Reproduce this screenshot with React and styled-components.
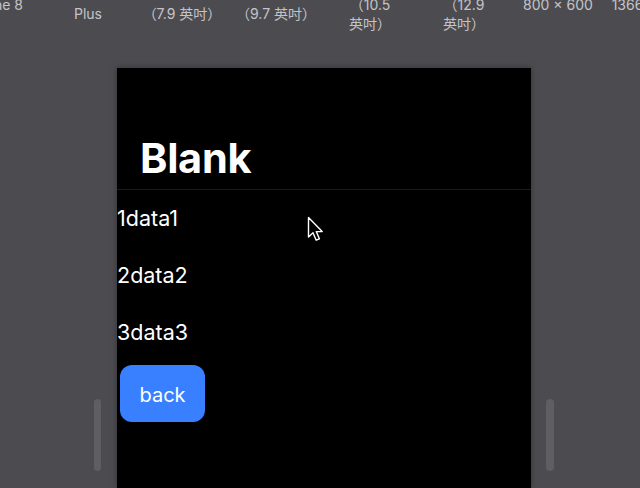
import { styled, createGlobalStyle } from "styled-components";

const GlobalStyle = createGlobalStyle`
  html, body {
    margin: 0;
    padding: 0;
    background-color: #4c4c50;
    overflow: hidden;
  }
  body {
    font-family: "Inter", "Noto Sans CJK TC", sans-serif;
  }
`;

const Page = styled.div`
  position: relative;
  height: 488px;
  display: flex;
  flex-direction: column;
`;

const DeviceBar = styled.div`
  display: flex;
  align-items: center;
  height: 8px;
  margin-left: -53px;
  flex-shrink: 0;
`;

const DeviceLabel = styled.div`
  flex: 0 0 94px;
  text-align: center;
  font-size: 14px;
  line-height: 19px;
  color: #c4c4c8;
  white-space: nowrap;
`;

const Stage = styled.div`
  display: flex;
  margin-top: 60px;
  flex: 1;
  min-height: 0;
`;

const Gutter = styled.div`
  display: flex;
  ${(props) =>
    props.side === "left"
      ? "flex: 0 0 117px; box-sizing: border-box; justify-content: flex-end; padding-right: 16px;"
      : "flex: 1; justify-content: flex-start; padding-left: 15px;"}
`;

const Handle = styled.div`
  margin-top: 331px;
  width: ${(props) => props.w}px;
  height: 72px;
  border-radius: 4px;
  background-color: #5f5f63;
`;

const Phone = styled.div`
  width: 414px;
  flex-shrink: 0;
  background-color: #000;
  box-shadow: 0 0 6px rgba(0, 0, 0, 0.35);
  color: #fff;
  display: flex;
  flex-direction: column;
`;

const Header = styled.div`
  height: 122px;
  box-sizing: border-box;
  display: flex;
  align-items: flex-end;
  padding: 0 22px 7px 23px;
  border-bottom: 1px solid #1a1a1c;
`;

const Title = styled.h1`
  margin: 0;
  font-size: 41.5px;
  line-height: 48px;
  font-weight: 700;
  letter-spacing: -0.3px;
`;

const Row = styled.div`
  height: 57px;
  line-height: 57px;
  font-size: 21.5px;
`;

const BackButton = styled.button`
  margin: 4px 0 0 3px;
  padding: 3px 0 0;
  width: 85px;
  height: 57px;
  border: none;
  border-radius: 12px;
  background-color: #3880ff;
  color: #fff;
  font-family: inherit;
  font-size: 20px;
  align-self: flex-start;
`;

const Cursor = styled.svg`
  position: absolute;
  left: 307px;
  top: 216px;
`;

const devices = [
  ["iPhone 8"],
  ["iPhone 8", "Plus"],
  ["iPad mini", "（7.9 英吋）"],
  ["iPad", "（9.7 英吋）"],
  ["iPad Pro", "（10.5", "英吋）"],
  ["iPad Pro", "（12.9", "英吋）"],
  ["800 × 600"],
  ["1366 × 1024"],
];

const items = [
  { id: 1, name: "data1" },
  { id: 2, name: "data2" },
  { id: 3, name: "data3" },
];

export default function App() {
  return (
    <Page>
      <GlobalStyle />
      <DeviceBar>
        {devices.map((lines, i) => (
          <DeviceLabel key={i}>
            {lines.map((line, j) => (
              <div key={j}>{line}</div>
            ))}
          </DeviceLabel>
        ))}
      </DeviceBar>
      <Stage>
        <Gutter side="left">
          <Handle w={7} />
        </Gutter>
        <Phone>
          <Header>
            <Title>Blank</Title>
          </Header>
          {items.map((item) => (
            <Row key={item.id}>
              {item.id}
              {item.name}
            </Row>
          ))}
          <BackButton>back</BackButton>
        </Phone>
        <Gutter side="right">
          <Handle w={8} />
        </Gutter>
      </Stage>
      <Cursor width="18" height="27" viewBox="0 0 18 27">
        <path
          d="M1.5 1.5 L1.5 21 L6 16.8 L9.2 24.2 L12.4 22.8 L9.3 15.6 L15.2 15.6 Z"
          fill="#000"
          stroke="#fff"
          strokeWidth="1.4"
          strokeLinejoin="round"
        />
      </Cursor>
    </Page>
  );
}
